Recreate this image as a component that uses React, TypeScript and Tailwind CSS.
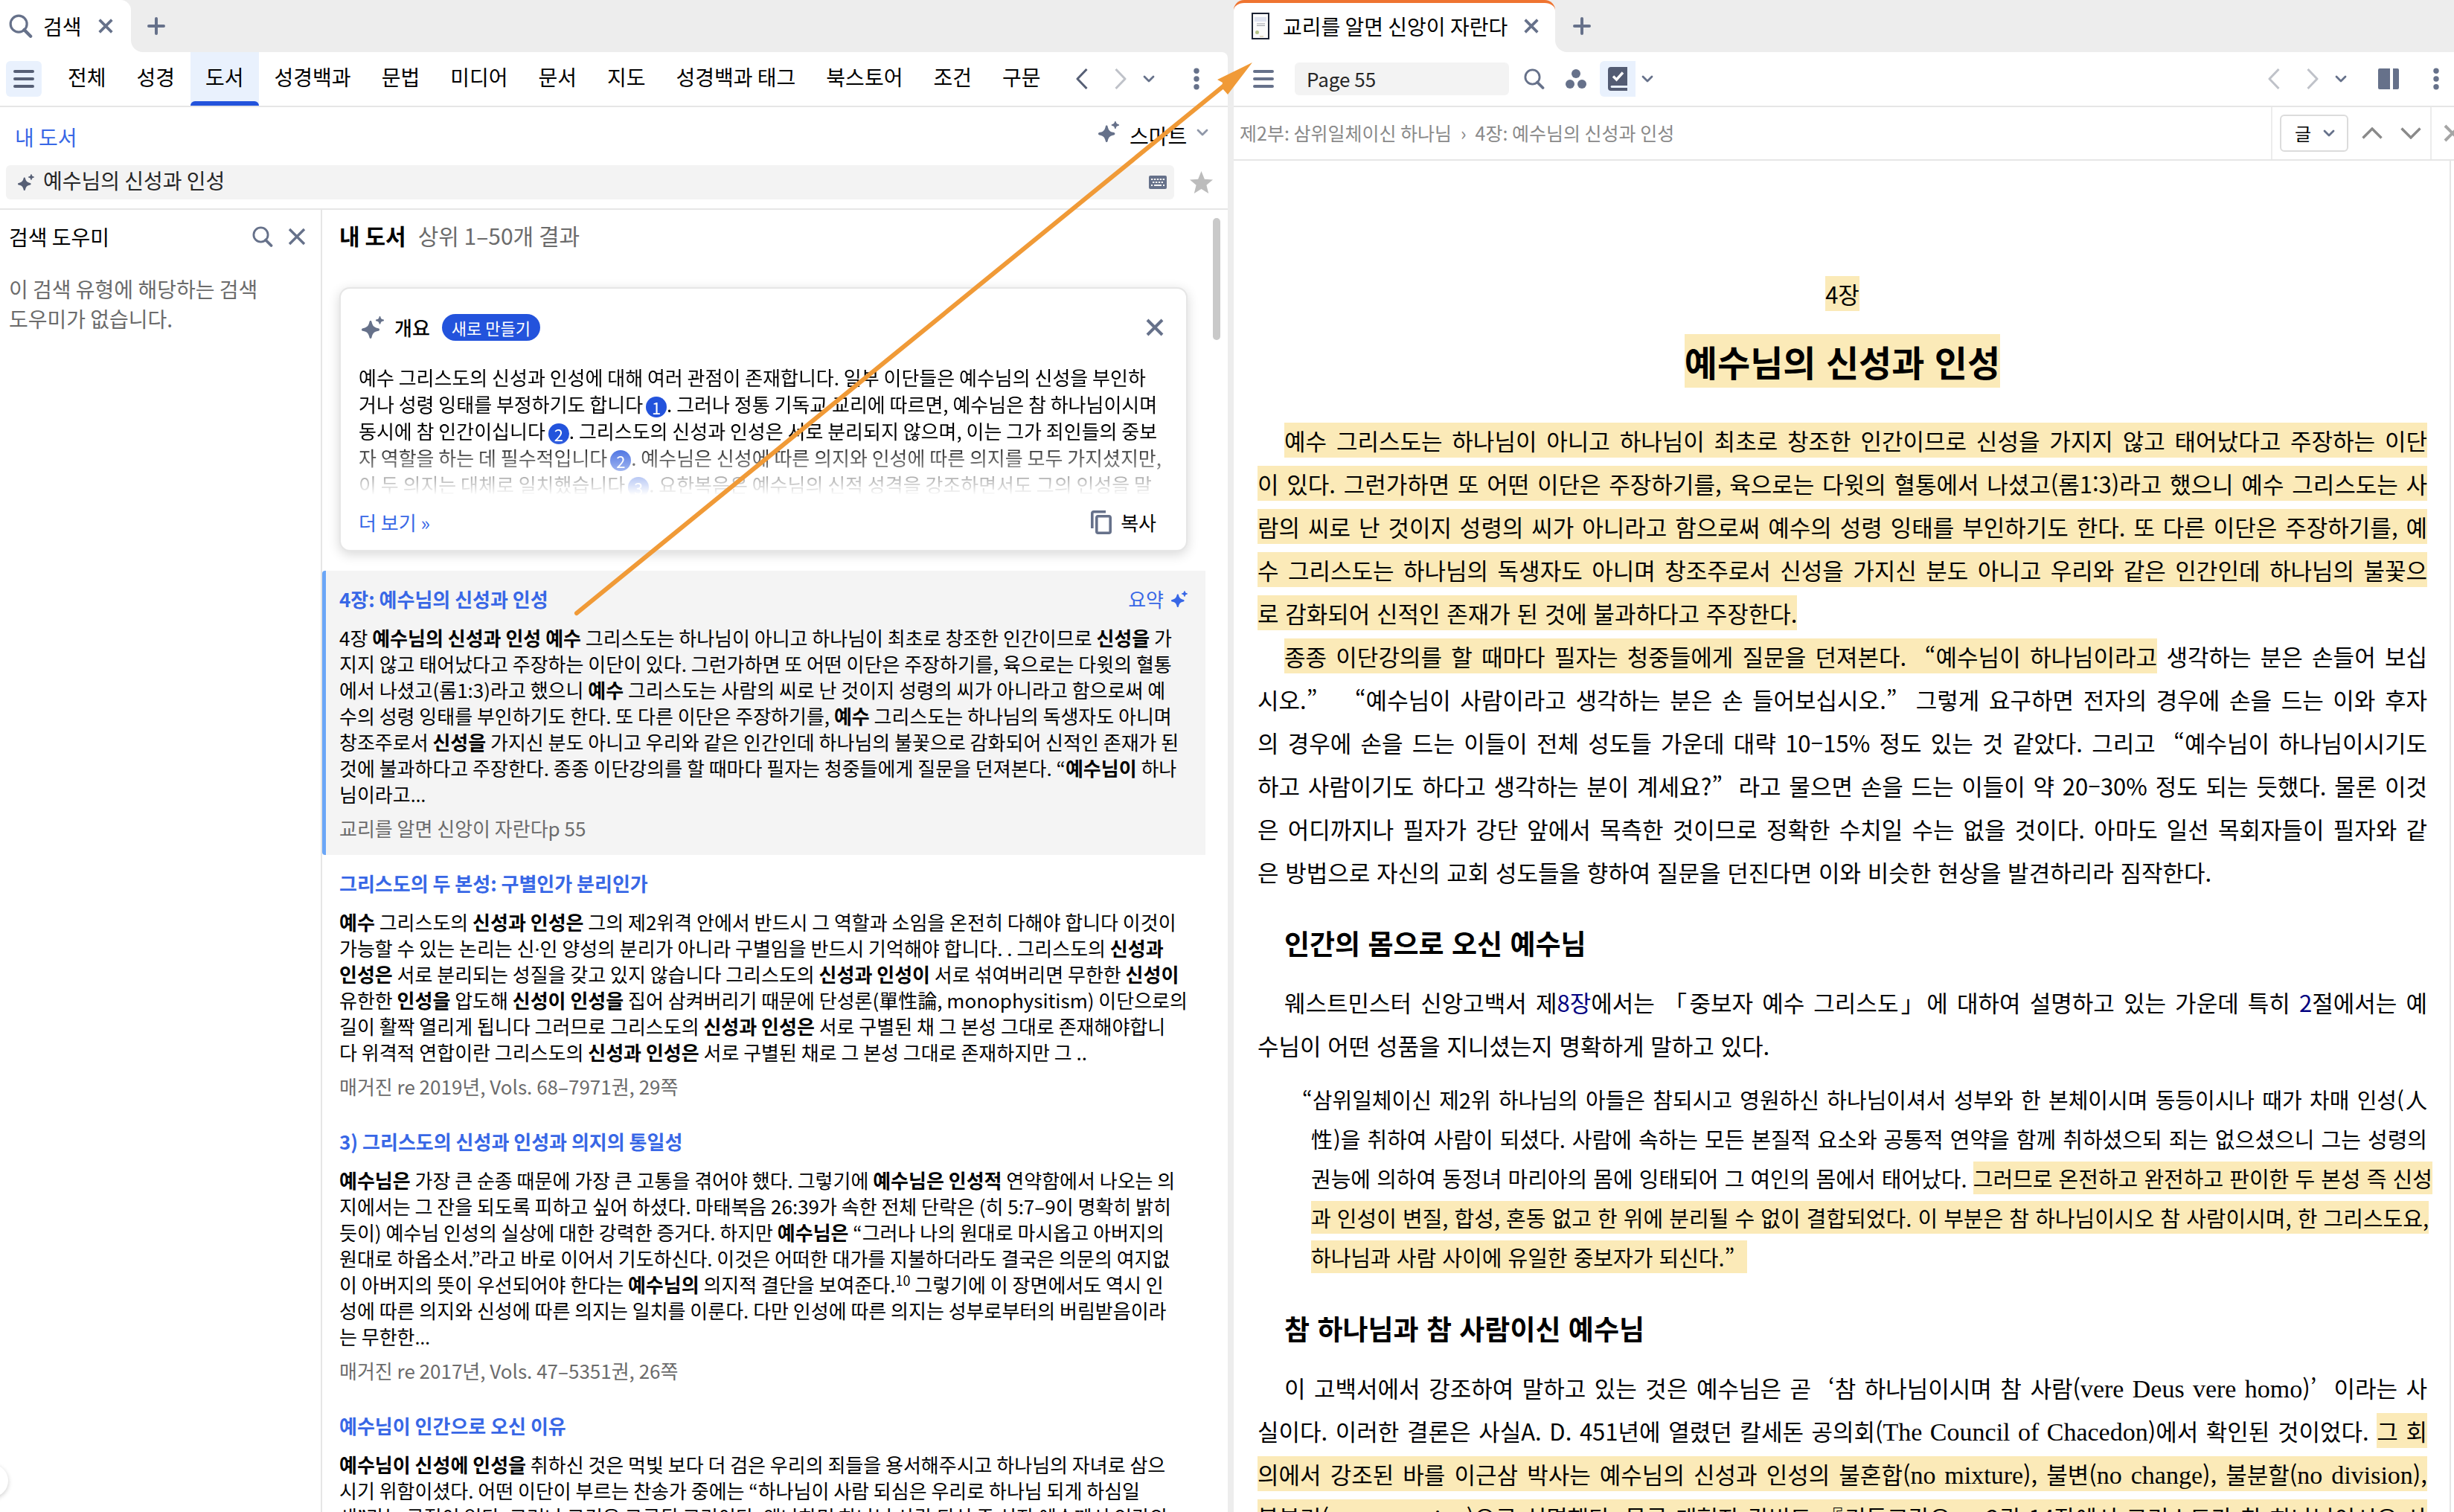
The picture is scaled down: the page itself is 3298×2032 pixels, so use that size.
import { Fragment, type ReactNode } from "react";

type IconProps = { className?: string };

function SearchIcon({ className = "" }: IconProps) {
  return (
    <svg viewBox="0 0 28 28" className={className} fill="none" stroke="currentColor" aria-hidden="true">
      <circle cx="11.5" cy="11.5" r="9.6" strokeWidth="2.8" />
      <path d="M18 18.5 25.5 26" strokeWidth="3.8" strokeLinecap="round" />
    </svg>
  );
}

function CloseIcon({ className = "", weight = 3.4 }: IconProps & { weight?: number }) {
  return (
    <svg viewBox="0 0 24 24" className={className} fill="none" stroke="currentColor" strokeWidth={weight} aria-hidden="true">
      <path d="M2 2 22 22M22 2 2 22" />
    </svg>
  );
}

function PlusIcon({ className = "" }: IconProps) {
  return (
    <svg viewBox="0 0 24 24" className={className} fill="none" stroke="currentColor" strokeWidth="4" strokeLinecap="round" aria-hidden="true">
      <path d="M12 2v20M2 12h20" />
    </svg>
  );
}

function MenuIcon({ className = "" }: IconProps) {
  return (
    <svg viewBox="0 0 28 24" className={className} fill="none" stroke="currentColor" strokeWidth="4" strokeLinecap="round" aria-hidden="true">
      <path d="M2 2h24M2 12h24M2 22h24" />
    </svg>
  );
}

function ChevronLeftIcon({ className = "" }: IconProps) {
  return (
    <svg viewBox="0 0 16 28" className={className} fill="none" stroke="currentColor" strokeWidth="3" strokeLinejoin="round" aria-hidden="true">
      <path d="M14.5 1 2 14l12.500 13" />
    </svg>
  );
}

function ChevronRightIcon({ className = "" }: IconProps) {
  return (
    <svg viewBox="0 0 16 28" className={className} fill="none" stroke="currentColor" strokeWidth="3" strokeLinejoin="round" aria-hidden="true">
      <path d="M1.500 1 14 14 1.500 27" />
    </svg>
  );
}

function ChevronDownIcon({ className = "" }: IconProps) {
  return (
    <svg viewBox="0 0 16 10" className={className} fill="none" stroke="currentColor" strokeWidth="2.800" strokeLinecap="round" strokeLinejoin="round" aria-hidden="true">
      <path d="M2 2l6 6 6-6" />
    </svg>
  );
}

function WideChevron({ className = "", up = false }: IconProps & { up?: boolean }) {
  return (
    <svg viewBox="0 0 28 16" className={className} fill="none" stroke="currentColor" strokeWidth="3.4" aria-hidden="true">
      <path d={up ? "M1.500 14.500 14 2l12.500 12.500" : "M1.500 1.500 14 14 26.500 1.500"} />
    </svg>
  );
}

function DotsIcon({ className = "" }: IconProps) {
  return (
    <svg viewBox="0 0 8 30" className={className} fill="currentColor" aria-hidden="true">
      <circle cx="4" cy="4.300" r="3.700" />
      <circle cx="4" cy="15" r="3.700" />
      <circle cx="4" cy="25.700" r="3.700" />
    </svg>
  );
}

function SparkleIcon({ className = "" }: IconProps) {
  return (
    <svg viewBox="0 0 30 30" className={className} fill="currentColor" aria-hidden="true">
      <path d="M12 6c1 0 1.300.6 1.700 2.200 1 4 2.600 6.600 7.600 7.700 2 .4 2.700.8 2.700 2.100s-.7 1.700-2.700 2.100c-5 1.100-6.600 3.700-7.600 7.700C13.300 29.400 13 30 12 30s-1.300-.6-1.700-2.200c-1-4-2.600-6.600-7.600-7.700C.7 19.700 0 19.300 0 18s.7-1.700 2.700-2.100c5-1.100 6.600-3.700 7.600-7.700C10.700 6.600 11 6 12 6Z" />
      <path d="M24.500 0c.7 0 .8.4 1 1.200.4 1.700 1.100 2.600 3.300 3.100.8.200 1.200.4 1.200 1.100s-.4.900-1.200 1.100c-2.200.5-2.900 1.400-3.300 3.100-.2.800-.3 1.200-1 1.200s-.8-.4-1-1.200c-.4-1.700-1.100-2.600-3.300-3.100-.8-.2-1.200-.4-1.200-1.100s.4-.9 1.200-1.100c2.200-.5 2.900-1.400 3.300-3.100.2-.8.300-1.200 1-1.200Z" />
    </svg>
  );
}

function KeyboardIcon({ className = "" }: IconProps) {
  return (
    <svg viewBox="0 0 24 18" className={className} aria-hidden="true">
      <rect width="24" height="18" rx="2" fill="currentColor" />
      <path d="M3 5h18" stroke="#f3f3f3" strokeWidth="2" strokeDasharray="2.400 1.500" />
      <path d="M5 9h14" stroke="#f3f3f3" strokeWidth="2" strokeDasharray="2.400 1.500" />
      <path d="M3 13h2M7 13h10M19 13h2" stroke="#f3f3f3" strokeWidth="2" />
    </svg>
  );
}

function StarIcon({ className = "" }: IconProps) {
  return (
    <svg viewBox="0 0 30 29" className={className} fill="currentColor" aria-hidden="true">
      <path d="M15 0l4.200 10.400L30 11.200l-8.300 7L24.400 29 15 23.100 5.600 29l2.700-10.800L0 11.200l10.800-.8Z" />
    </svg>
  );
}

function CopyIcon({ className = "" }: IconProps) {
  return (
    <svg viewBox="0 0 28 32" className={className} fill="none" stroke="currentColor" strokeWidth="3.600" aria-hidden="true">
      <path d="M20 1.800H3.800a2 2 0 0 0-2 2V24" />
      <rect x="7.800" y="7.800" width="18.400" height="22.400" rx="2" />
    </svg>
  );
}

function TrioIcon({ className = "" }: IconProps) {
  return (
    <svg viewBox="0 0 28 26" className={className} fill="currentColor" aria-hidden="true">
      <circle cx="14" cy="6" r="6" />
      <circle cx="6" cy="20" r="6" />
      <circle cx="22" cy="20" r="6" />
    </svg>
  );
}

function BookCheckIcon({ className = "" }: IconProps) {
  return (
    <svg viewBox="0 0 26 32" className={className} aria-hidden="true">
      <path d="M4 0h22v25H5.500a1.500 1.500 0 0 0-1.500 2.500c.4.400.9.500 1.500.5H26v4H4a4 4 0 0 1-4-4V4a4 4 0 0 1 4-4Z" fill="currentColor" />
      <path d="M7 12.500l4.500 4.500L20 7.500" fill="none" stroke="#fff" strokeWidth="3.400" />
    </svg>
  );
}

function PanelsIcon({ className = "" }: IconProps) {
  return (
    <svg viewBox="0 0 28 28" className={className} fill="currentColor" aria-hidden="true">
      <path d="M2 0h14v28H2a2 2 0 0 1-2-2V2a2 2 0 0 1 2-2ZM20 0h6a2 2 0 0 1 2 2v24a2 2 0 0 1-2 2h-6Z" />
    </svg>
  );
}

function BookCover({ className = "" }: IconProps) {
  return (
    <svg viewBox="0 0 24 36" className={className} aria-hidden="true">
      <rect x="1" y="1" width="22" height="34" fill="#fbfbfb" stroke="#1b2233" strokeWidth="2" />
      <path d="M4 6h16v6H4Z" fill="#dfe3f0" />
      <path d="M7 15h11M7 17.500h11" stroke="#9da0a8" strokeWidth="1.200" />
      <circle cx="7.500" cy="26.500" r="2.500" fill="#b5c48a" />
      <path d="M11 32h5" stroke="#c9b98f" strokeWidth="1" />
    </svg>
  );
}

const searchTabs = ["전체", "성경", "도서", "성경백과", "문법", "미디어", "문서", "지도", "성경백과 태그", "북스토어", "조건", "구문"];

function B({ children }: { children: ReactNode }) {
  return <strong className="font-bold">{children}</strong>;
}

/** Western punctuation whose Korean form sits differently on the line. */
function W({ children }: { children: ReactNode }) {
  return <span className="font-['Noto_Sans',sans-serif] leading-none">{children}</span>;
}

function Ref({ n }: { n: number }) {
  return (
    <a href="#" className="-my-2 ml-1 inline-flex size-7 items-center justify-center rounded-full bg-[#2353dc] align-middle text-[22px] leading-7 text-white">
      {n}
    </a>
  );
}

function Broken({ lines }: { lines: ReactNode[] }) {
  return (
    <>
      {lines.map((line, i) => (
        <Fragment key={i}>
          {i > 0 && <br />}
          {line}
        </Fragment>
      ))}
    </>
  );
}

type Result = { title: string; lines: ReactNode[]; source?: string; selected?: boolean };

const results: Result[] = [
  {
    title: "4장: 예수님의 신성과 인성",
    selected: true,
    lines: [
      <>4장 <B>예수님의 신성과 인성 예수</B> 그리스도는 하나님이 아니고 하나님이 최초로 창조한 인간이므로 <B>신성을</B> 가</>,
      <>지지 않고 태어났다고 주장하는 이단이 있다. 그런가하면 또 어떤 이단은 주장하기를, 육으로는 다윗의 혈통</>,
      <>에서 나셨고(롬1:3)라고 했으니 <B>예수</B> 그리스도는 사람의 씨로 난 것이지 성령의 씨가 아니라고 함으로써 예</>,
      <>수의 성령 잉태를 부인하기도 한다. 또 다른 이단은 주장하기를, <B>예수</B> 그리스도는 하나님의 독생자도 아니며</>,
      <>창조주로서 <B>신성을</B> 가지신 분도 아니고 우리와 같은 인간인데 하나님의 불꽃으로 감화되어 신적인 존재가 된</>,
      <>것에 불과하다고 주장한다. 종종 이단강의를 할 때마다 필자는 청중들에게 질문을 던져본다. “<B>예수님이</B> 하나</>,
      <>님이라고<W>…</W></>,
    ],
    source: "교리를 알면 신앙이 자란다p 55",
  },
  {
    title: "그리스도의 두 본성: 구별인가 분리인가",
    lines: [
      <><B>예수</B> 그리스도의 <B>신성과 인성은</B> 그의 제2위격 안에서 반드시 그 역할과 소임을 온전히 다해야 합니다 이것이</>,
      <>가능할 수 있는 논리는 신<W>·</W>인 양성의 분리가 아니라 구별임을 반드시 기억해야 합니다. . 그리스도의 <B>신성과</B></>,
      <><B>인성은</B> 서로 분리되는 성질을 갖고 있지 않습니다 그리스도의 <B>신성과 인성이</B> 서로 섞여버리면 무한한 <B>신성이</B></>,
      <>유한한 <B>인성을</B> 압도해 <B>신성이 인성을</B> 집어 삼켜버리기 때문에 단성론(單性論, monophysitism) 이단으로의</>,
      <>길이 활짝 열리게 됩니다 그러므로 그리스도의 <B>신성과 인성은</B> 서로 구별된 채 그 본성 그대로 존재해야합니</>,
      <>다 위격적 연합이란 그리스도의 <B>신성과 인성은</B> 서로 구별된 채로 그 본성 그대로 존재하지만 그 ..</>,
    ],
    source: "매거진 re 2019년, Vols. 68–7971권, 29쪽",
  },
  {
    title: "3) 그리스도의 신성과 인성과 의지의 통일성",
    lines: [
      <><B>예수님은</B> 가장 큰 순종 때문에 가장 큰 고통을 겪어야 했다. 그렇기에 <B>예수님은 인성적</B> 연약함에서 나오는 의</>,
      <>지에서는 그 잔을 되도록 피하고 싶어 하셨다. 마태복음 26:39가 속한 전체 단락은 (히 5:7–9이 명확히 밝히</>,
      <>듯이) 예수님 인성의 실상에 대한 강력한 증거다. 하지만 <B>예수님은</B> “그러나 나의 원대로 마시옵고 아버지의</>,
      <>원대로 하옵소서.”라고 바로 이어서 기도하신다. 이것은 어떠한 대가를 지불하더라도 결국은 의문의 여지없</>,
      <>이 아버지의 뜻이 우선되어야 한다는 <B>예수님의</B> 의지적 결단을 보여준다.<sup className="text-[18px] leading-none">10</sup> 그렇기에 이 장면에서도 역시 인</>,
      <>성에 따른 의지와 신성에 따른 의지는 일치를 이룬다. 다만 인성에 따른 의지는 성부로부터의 버림받음이라</>,
      <>는 무한한<W>…</W></>,
    ],
    source: "매거진 re 2017년, Vols. 47–5351권, 26쪽",
  },
  {
    title: "예수님이 인간으로 오신 이유",
    lines: [
      <><B>예수님이 신성에 인성을</B> 취하신 것은 먹빛 보다 더 검은 우리의 죄들을 용서해주시고 하나님의 자녀로 삼으</>,
      <>시기 위함이셨다. 어떤 이단이 부르는 찬송가 중에는 “하나님이 사람 되심은 우리로 하나님 되게 하심일</>,
      <>새”라는 구절이 있다. 그러나 그것은 그릇된 교리이다. 왜냐하면 하나님 사람 되신 주 성자 예수께서 인간의</>,
    ],
  },
];

function ResultItem({ title, lines, source, selected }: Result) {
  return (
    <article className={`mr-[30px] rounded-l border-l-[5px] pt-5 pr-6 pb-[19px] pl-[18px] ${selected ? "border-[#6ba6f7] bg-[#f4f4f4]" : "border-transparent"}`}>
      <div className="mb-4 flex items-center justify-between text-[26px] leading-9 text-[#3867e6]">
        <h3 className="font-bold">
          <a href="#">{title}</a>
        </h3>
        {selected && (
          <button type="button" className="flex items-center gap-2.5">
            요약
            <SparkleIcon className="size-[22px]" />
          </button>
        )}
      </div>
      <p className="text-[26px] leading-[35px] whitespace-nowrap text-black">
        <Broken lines={lines} />
      </p>
      {source && <p className="mt-[11px] text-[26px] leading-[35px] text-[#6b6b6b]">{source}</p>}
    </article>
  );
}

const overviewLines: ReactNode[] = [
  <>예수 그리스도의 신성과 인성에 대해 여러 관점이 존재합니다. 일부 이단들은 예수님의 신성을 부인하</>,
  <>거나 성령 잉태를 부정하기도 합니다<Ref n={1} />. 그러나 정통 기독교 교리에 따르면, 예수님은 참 하나님이시며</>,
  <>동시에 참 인간이십니다<Ref n={2} />. 그리스도의 신성과 인성은 서로 분리되지 않으며, 이는 그가 죄인들의 중보</>,
  <>자 역할을 하는 데 필수적입니다<Ref n={2} />. 예수님은 신성에 따른 의지와 인성에 따른 의지를 모두 가지셨지만,</>,
  <>이 두 의지는 대체로 일치했습니다<Ref n={3} />. 요한복음은 예수님의 신적 성격을 강조하면서도 그의 인성을 말</>,
];

function OverviewCard() {
  return (
    <section className="mr-[54px] ml-[23px] rounded-[14px] border-2 border-[#e6e6e6] bg-white px-6 pt-[26px] pb-[17px] shadow-[0_4px_16px_rgba(0,0,0,0.16)]">
      <div className="flex h-[52px] items-center">
        <SparkleIcon className="ml-1 size-[30px] text-[#66718a]" />
        <h2 className="ml-3.5 text-[26px] leading-9 font-medium">개요</h2>
        <button type="button" className="ml-4 h-9 rounded-full bg-[#2353dc] px-[13px] text-[22px] leading-8 text-white">
          새로 만들기
        </button>
        <button type="button" aria-label="닫기" className="mr-1.5 ml-auto text-[#66718a]">
          <CloseIcon className="size-6" weight={4} />
        </button>
      </div>
      <p className="mt-[23px] h-[180px] text-[26px] leading-9 whitespace-nowrap [mask-image:linear-gradient(to_bottom,black_56%,transparent_98%)]">
        <Broken lines={overviewLines} />
      </p>
      <div className="mt-[13px] flex h-10 items-center justify-between text-[26px] leading-9">
        <a href="#" className="text-[#3867e6]">더 보기 »</a>
        <button type="button" className="mr-4 flex items-center gap-3">
          <CopyIcon className="h-8 w-7 text-[#66718a]" />
          복사
        </button>
      </div>
    </section>
  );
}

function SearchPanel() {
  return (
    <section className="flex min-h-0 min-w-0 flex-col">
      <div className="flex h-[70px] shrink-0">
        <div className="bg-[#ededed]">
          <div className="flex h-full items-center rounded-tr-[14px] bg-white pr-6 pl-3 text-[#66718a]">
            <SearchIcon className="size-8" />
            <span className="ml-3.5 text-[28px] leading-10 text-black">검색</span>
            <button type="button" aria-label="탭 닫기" className="ml-[22px]">
              <CloseIcon className="size-5" weight={4.4} />
            </button>
          </div>
        </div>
        <div className="flex-1 bg-white">
          <div className="flex h-full items-center rounded-bl-[16px] bg-[#ededed] pl-[22px] text-[#66718a]">
            <button type="button" aria-label="새 탭">
              <PlusIcon className="size-6" />
            </button>
          </div>
        </div>
      </div>

      <div className="flex min-h-0 flex-1 flex-col rounded-tr-lg bg-white">
        <div className="flex h-[74px] shrink-0 items-center border-b-2 border-[#e6e6e6] pr-[38px] pl-2">
          <button type="button" aria-label="메뉴" className="mr-[15px] flex size-12 shrink-0 items-center justify-center rounded-md bg-[#e9f1fd] text-[#565f75]">
            <MenuIcon className="h-6 w-7" />
          </button>
          <nav className="flex h-full gap-px text-[28px] leading-10">
            {searchTabs.map((label) => (
              <button
                key={label}
                type="button"
                className={`relative px-5 pb-1.5 whitespace-nowrap ${label === "도서" ? "bg-[#e9f1fd]" : ""}`}
              >
                {label}
                {label === "도서" && <span className="absolute inset-x-0 bottom-0 h-1.5 rounded-t-md bg-[#2353dc]" />}
              </button>
            ))}
          </nav>
          <div className="ml-auto flex items-center text-[#66718a]">
            <button type="button" aria-label="이전" className="text-[#565f75]">
              <ChevronLeftIcon className="h-7 w-4" />
            </button>
            <button type="button" aria-label="다음" className="ml-9 text-[#bfc2c9]">
              <ChevronRightIcon className="h-7 w-4" />
            </button>
            <button type="button" aria-label="기록" className="ml-[22px]">
              <ChevronDownIcon className="h-2.5 w-4" />
            </button>
            <button type="button" aria-label="더 보기" className="ml-[52px]">
              <DotsIcon className="h-[30px] w-2" />
            </button>
          </div>
        </div>

        <div className="shrink-0 border-b-2 border-[#e6e6e6] pb-3">
          <div className="flex h-[78px] items-center justify-between pt-0.5 pr-[26px] pl-5 text-[28px] leading-10">
            <a href="#" className="text-[#3867e6]">내 도서</a>
            <label className="flex items-center pb-1">
              <SparkleIcon className="mb-2.5 size-7 text-[#66718a]" />
              <select aria-label="검색 방식" className="ml-3.5 appearance-none bg-transparent text-black">
                <option>스마트</option>
              </select>
              <ChevronDownIcon className="mb-2 ml-3 h-2.5 w-4 text-[#8f97a8]" />
            </label>
          </div>
          <div className="flex items-center pr-5 pl-2">
            <div className="flex h-[46px] flex-1 items-center rounded-md bg-[#f3f3f3] pr-2.5 pl-4 text-[#66718a]">
              <SparkleIcon className="size-[22px] text-[#565f75]" />
              <input
                aria-label="검색어"
                defaultValue="예수님의 신성과 인성"
                className="ml-3 h-full min-w-0 flex-1 bg-transparent pb-1.5 text-[28px] leading-10 text-[#262626] outline-none"
              />
              <button type="button" aria-label="키보드">
                <KeyboardIcon className="h-[18px] w-6" />
              </button>
            </div>
            <button type="button" aria-label="즐겨찾기" className="ml-[21px] text-[#bcbcbc]">
              <StarIcon className="h-[30px] w-[31px]" />
            </button>
          </div>
        </div>

        <div className="flex min-h-0 flex-1">
          <aside className="w-[433px] shrink-0 border-r-2 border-[#e6e6e6] pr-5 pl-3 text-[28px] leading-10">
            <div className="mt-4 flex items-center">
              <h2>검색 도우미</h2>
              <button type="button" aria-label="도우미 검색" className="ml-auto text-[#66718a]">
                <SearchIcon className="size-7" />
              </button>
              <button type="button" aria-label="닫기" className="ml-5 text-[#66718a]">
                <CloseIcon className="size-6" />
              </button>
            </div>
            <p className="mt-[30px] w-[350px] break-keep text-[#6b6b6b]">이 검색 유형에 해당하는 검색 도우미가 없습니다.</p>
          </aside>

          <div className="relative min-w-0 flex-1 overflow-hidden">
            <div className="absolute top-[11px] right-2.5 h-[164px] w-2.5 rounded-full bg-[#c9c9c9]" />
            <h2 className="mt-3 mb-12 pl-[23px] text-[30px] leading-[44px] text-[#6b6b6b]">
              <span className="mr-4 font-bold text-black">내 도서</span>상위 1–50개 결과
            </h2>
            <OverviewCard />
            <div className="mt-[26px]">
              {results.map((r) => (
                <ResultItem key={r.title} {...r} />
              ))}
            </div>
          </div>
        </div>
      </div>
    </section>
  );
}

function Mark({ children }: { children: ReactNode }) {
  return <mark className="bg-[#fbeab8] py-px text-black">{children}</mark>;
}

function Latin({ children }: { children: ReactNode }) {
  return <span className="font-['Liberation_Serif',serif] text-[34px] leading-none">{children}</span>;
}

/** A run of typeset lines, every line but the last filled to the full measure. */
function Lines({ lines, indent, openEnd = false }: { lines: ReactNode[]; indent: string; openEnd?: boolean }) {
  return (
    <>
      {lines.map((line, i) => (
        <span
          key={i}
          className={`block whitespace-nowrap ${i === 0 ? indent : "indent-0"} ${i < lines.length - 1 || openEnd ? "[text-align-last:justify]" : ""}`}
        >
          {line}
        </span>
      ))}
    </>
  );
}

const firstParagraph: ReactNode[] = [
  <Mark>예수 그리스도는 하나님이 아니고 하나님이 최초로 창조한 인간이므로 신성을 가지지 않고 태어났다고 주장하는 이단</Mark>,
  <Mark>이 있다. 그런가하면 또 어떤 이단은 주장하기를, 육으로는 다윗의 혈통에서 나셨고(롬1:3)라고 했으니 예수 그리스도는 사</Mark>,
  <Mark>람의 씨로 난 것이지 성령의 씨가 아니라고 함으로써 예수의 성령 잉태를 부인하기도 한다. 또 다른 이단은 주장하기를, 예</Mark>,
  <Mark>수 그리스도는 하나님의 독생자도 아니며 창조주로서 신성을 가지신 분도 아니고 우리와 같은 인간인데 하나님의 불꽃으</Mark>,
  <Mark>로 감화되어 신적인 존재가 된 것에 불과하다고 주장한다.</Mark>,
];

const secondParagraph: ReactNode[] = [
  <><Mark>종종 이단강의를 할 때마다 필자는 청중들에게 질문을 던져본다. &nbsp;“예수님이 하나님이라고</Mark> 생각하는 분은 손들어 보십</>,
  <>시오.” &nbsp; &nbsp;“예수님이 사람이라고 생각하는 분은 손 들어보십시오.” &nbsp;그렇게 요구하면 전자의 경우에 손을 드는 이와 후자</>,
  <>의 경우에 손을 드는 이들이 전체 성도들 가운데 대략 10–15% 정도 있는 것 같았다. 그리고 &nbsp;“예수님이 하나님이시기도</>,
  <>하고 사람이기도 하다고 생각하는 분이 계세요?” &nbsp;라고 물으면 손을 드는 이들이 약 20–30% 정도 되는 듯했다. 물론 이것</>,
  <>은 어디까지나 필자가 강단 앞에서 목측한 것이므로 정확한 수치일 수는 없을 것이다. 아마도 일선 목회자들이 필자와 같</>,
  <>은 방법으로 자신의 교회 성도들을 향하여 질문을 던진다면 이와 비슷한 현상을 발견하리라 짐작한다.</>,
];

const confessionParagraph: ReactNode[] = [
  <>웨스트민스터 신앙고백서 제<a href="#" className="text-[#000080]">8장</a>에서는 「중보자 예수 그리스도」에 대하여 설명하고 있는 가운데 특히 <a href="#" className="text-[#000080]">2</a>절에서는 예</>,
  <>수님이 어떤 성품을 지니셨는지 명확하게 말하고 있다.</>,
];

const quotation: ReactNode[] = [
  <>“삼위일체이신 제2위 하나님의 아들은 참되시고 영원하신 하나님이셔서 성부와 한 본체이시며 동등이시나 때가 차매 인성(人</>,
  <>性)을 취하여 사람이 되셨다. 사람에 속하는 모든 본질적 요소와 공통적 연약을 함께 취하셨으되 죄는 없으셨으니 그는 성령의</>,
  <>권능에 의하여 동정녀 마리아의 몸에 잉태되어 그 여인의 몸에서 태어났다. <Mark>그러므로 온전하고 완전하고 판이한 두 본성 즉 신성</Mark></>,
  <Mark>과 인성이 변질, 합성, 혼동 없고 한 위에 분리될 수 없이 결합되었다. 이 부분은 참 하나님이시오 참 사람이시며, 한 그리스도요,</Mark>,
  <Mark>하나님과 사람 사이에 유일한 중보자가 되신다.”&nbsp;&nbsp;</Mark>,
];

const councilParagraph: ReactNode[] = [
  <>이 고백서에서 강조하여 말하고 있는 것은 예수님은 곧 &nbsp;‘참 하나님이시며 참 사람(<Latin>vere Deus vere homo</Latin>)’ &nbsp;이라는 사</>,
  <>실이다. 이러한 결론은 사실A. D. 451년에 열렸던 칼세돈 공의회(<Latin>The Council of Chacedon</Latin>)에서 확인된 것이었다. <Mark>그 회</Mark></>,
  <Mark>의에서 강조된 바를 이근삼 박사는 예수님의 신성과 인성의 불혼합(<Latin>no mixture</Latin>), 불변(<Latin>no change</Latin>), 불분할(<Latin>no division</Latin>),</Mark>,
  <Mark>불분리(<Latin>no separation</Latin>)으로 설명했다. 물론 개혁자 칼빈도 『기독교강요』 2권 14장에서 그리스도가 참 하나님이시요 사</Mark>,
];

function Reader() {
  return (
    <article lang="ko" className="mr-1 min-h-0 flex-1 overflow-hidden border-r-2 border-[#e6e6e6] pr-[30px] pl-8 text-[31px] leading-[58px] text-black">
      <p className="mt-[150px] text-center">
        <Mark>4장</Mark>
      </p>
      <h1 className="mt-[26px] text-center text-[48px] leading-[70px] font-bold">
        <Mark>예수님의 신성과 인성</Mark>
      </h1>
      <p className="mt-[43px]">
        <Lines indent="indent-9" lines={firstParagraph} />
      </p>
      <p>
        <Lines indent="indent-9" lines={secondParagraph} />
      </p>
      <h2 className="mt-[37px] pl-9 text-[37px] leading-[58px] font-bold">인간의 몸으로 오신 예수님</h2>
      <p className="mt-[22px]">
        <Lines indent="indent-9" lines={confessionParagraph} />
      </p>
      <blockquote className="mt-[17px] pl-[72px] text-[29px] leading-[53px]">
        <Lines indent="-indent-3" lines={quotation} />
      </blockquote>
      <h2 className="mt-10 pl-9 text-[37px] leading-[58px] font-bold">참 하나님과 참 사람이신 예수님</h2>
      <p className="mt-[22px]">
        <Lines indent="indent-9" lines={councilParagraph} openEnd />
      </p>
    </article>
  );
}

function ReaderPanel() {
  return (
    <section className="flex min-h-0 min-w-0 flex-col">
      <div className="flex h-[70px] shrink-0">
        <div className="bg-[#ededed]">
          <div className="flex h-full items-center rounded-t-[14px] border-t-4 border-[#ef7430] bg-white pr-[22px] pb-1 pl-6 text-[#66718a]">
            <BookCover className="h-9 w-6" />
            <span className="ml-[18px] text-[28px] leading-10 text-black">교리를 알면 신앙이 자란다</span>
            <button type="button" aria-label="탭 닫기" className="ml-[22px]">
              <CloseIcon className="size-5" weight={4.4} />
            </button>
          </div>
        </div>
        <div className="flex-1 bg-white">
          <div className="flex h-full items-center rounded-bl-[16px] bg-[#ededed] pl-6 text-[#66718a]">
            <button type="button" aria-label="새 탭">
              <PlusIcon className="size-6" />
            </button>
          </div>
        </div>
      </div>

      <div className="flex min-h-0 flex-1 flex-col bg-white">
        <div className="flex h-[74px] shrink-0 items-center border-b-2 border-[#e6e6e6] pr-5 pl-[26px] text-[#66718a]">
          <button type="button" aria-label="메뉴">
            <MenuIcon className="h-6 w-7" />
          </button>
          <input
            aria-label="페이지"
            defaultValue="Page 55"
            className="ml-7 h-11 w-[288px] rounded-md bg-[#f3f3f3] px-4 pb-0.5 text-[26px] leading-10 text-[#262626] outline-none"
          />
          <button type="button" aria-label="검색" className="ml-5">
            <SearchIcon className="size-7" />
          </button>
          <button type="button" aria-label="비교" className="ml-7">
            <TrioIcon className="h-[26px] w-7" />
          </button>
          <button type="button" aria-label="필터" className="ml-[18px] flex size-12 items-center justify-center rounded-l-md bg-[#e9f1fd] text-[#535c73]">
            <BookCheckIcon className="h-8 w-[26px]" />
          </button>
          <button type="button" aria-label="필터 옵션" className="ml-2">
            <ChevronDownIcon className="h-2.5 w-4" />
          </button>
          <div className="ml-auto flex items-center">
            <button type="button" aria-label="이전" className="text-[#bfc2c9]">
              <ChevronLeftIcon className="h-7 w-4" />
            </button>
            <button type="button" aria-label="다음" className="ml-9 text-[#bfc2c9]">
              <ChevronRightIcon className="h-7 w-4" />
            </button>
            <button type="button" aria-label="기록" className="ml-[22px]">
              <ChevronDownIcon className="h-2.5 w-4" />
            </button>
            <button type="button" aria-label="보기" className="ml-[42px]">
              <PanelsIcon className="size-7" />
            </button>
            <button type="button" aria-label="더 보기" className="ml-[46px]">
              <DotsIcon className="h-[30px] w-2" />
            </button>
          </div>
        </div>

        <div className="flex h-[72px] shrink-0 items-center overflow-hidden border-b-2 border-[#e6e6e6] pl-2 text-[25px] leading-9 text-[#8a8a8a]">
          <nav className="flex-1 pb-0.5">
            <a href="#">제2부: 삼위일체이신 하나님</a>
            <span className="mx-3">›</span>
            <a href="#">4장: 예수님의 신성과 인성</a>
          </nav>
          <div className="flex h-full items-center gap-5 border-x-2 border-[#ececec] pr-3 pl-2.5">
            <label className="relative mr-[-2px] flex h-[50px] w-[92px] items-center rounded-md border-2 border-[#dcdcdc]">
              <select aria-label="탐색 단위" className="size-full appearance-none bg-transparent pl-[18px] text-[24px] text-black">
                <option>글</option>
              </select>
              <ChevronDownIcon className="pointer-events-none absolute right-4 h-2.5 w-4 text-[#66718a]" />
            </label>
            <button type="button" aria-label="위로">
              <WideChevron up className="h-4 w-7" />
            </button>
            <button type="button" aria-label="아래로" className="ml-1">
              <WideChevron className="h-4 w-7" />
            </button>
          </div>
          <button type="button" aria-label="닫기" className="-mr-2.5 ml-4 text-[#a5a5a5]">
            <CloseIcon className="size-6" weight={4} />
          </button>
        </div>

        <Reader />
      </div>
    </section>
  );
}

export default function App() {
  return (
    <main className="relative grid h-screen grid-cols-[1650fr_1640fr] grid-rows-1 gap-2 overflow-hidden bg-[#ededed] font-['Noto_Sans_CJK_KR','Noto_Sans',sans-serif] text-black">
      <SearchPanel />
      <ReaderPanel />
      <div className="absolute bottom-5 left-[-33px] size-11 rounded-full bg-white shadow-[0_2px_6px_rgba(0,0,0,0.2)]" />
      <svg className="pointer-events-none absolute top-0 left-0 h-[840px] w-[1700px]" viewBox="0 0 1700 840" aria-hidden="true">
        <path d="M775 824 1650 111" stroke="#f09a37" strokeWidth="6" strokeLinecap="round" />
        <path d="M1683 84 1636 107l7 4-1 7 8 9Z" fill="#f09a37" />
      </svg>
    </main>
  );
}
